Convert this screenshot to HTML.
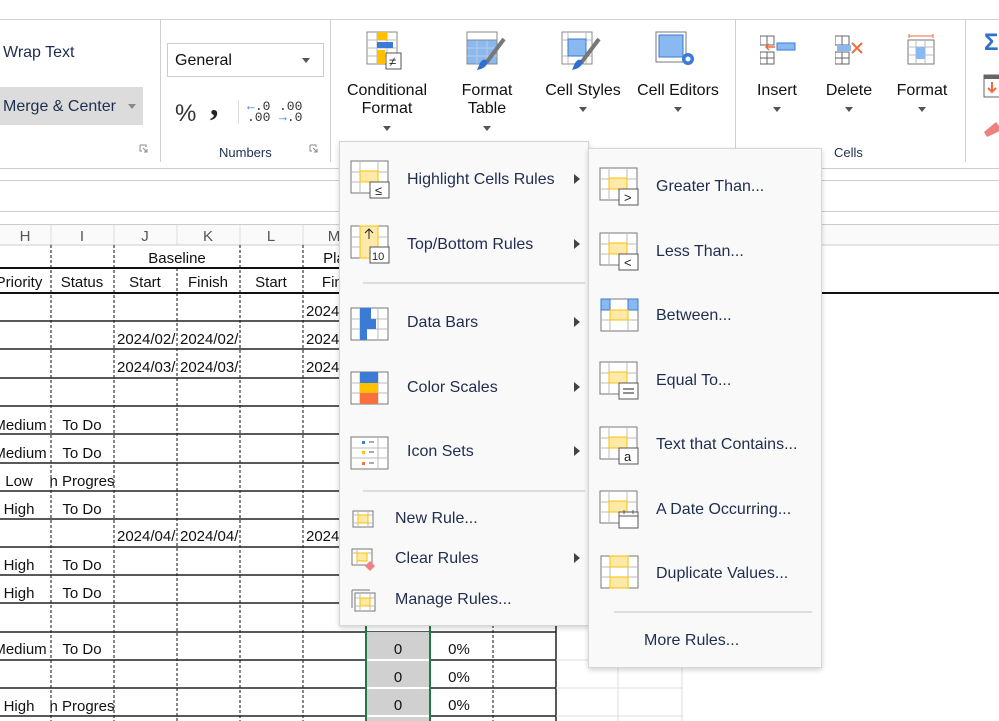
<!DOCTYPE html>
<html><head><meta charset="utf-8"><style>
*{margin:0;padding:0;box-sizing:border-box}
body{width:999px;height:721px;overflow:hidden;background:#fff;font-family:"Liberation Sans",Arial,sans-serif;position:relative}
.a{position:absolute;white-space:nowrap}
.rl{font-size:16px;color:#111;text-align:center;line-height:18px}
.tri{width:0;height:0;border-left:4px solid transparent;border-right:4px solid transparent;border-top:5px solid #555;position:absolute}
.menu{position:absolute;background:#f9f9f9;border:1px solid #d6d6d6;box-shadow:0 2px 5px rgba(0,0,0,.18)}
.mt{position:absolute;font-size:16px;color:#1f2d4e;white-space:nowrap}
.ar{position:absolute;width:0;height:0;border-top:5px solid transparent;border-bottom:5px solid transparent;border-left:6px solid #444}
.sep{position:absolute;height:2px;background:#ddd}
.lbl{font-size:13px;color:#1f2d4e}
</style></head><body>
<!-- ribbon -->
<div class="a" style="left:0;top:19px;width:999px;height:1px;background:#d0d0d0"></div>
<div class="a" style="left:3px;top:44px;font-size:16px;color:#1f2d4e">Wrap Text</div>
<div class="a" style="left:0;top:87px;width:143px;height:38px;background:#dcdcdc"></div>
<div class="a" style="left:3px;top:98px;font-size:16px;color:#1f2d4e">Merge &amp; Center</div>
<div class="tri" style="left:128px;top:104px;border-top-color:#888"></div>
<svg class="a" style="left:139px;top:144px" width="10" height="10"><path d="M1 1h6v2M1 1v6h2M4 4l4 4M8 5v3H5" stroke="#888" fill="none"/></svg>
<div class="a" style="left:160px;top:20px;width:1px;height:142px;background:#d0d0d0"></div>
<div class="a" style="left:167px;top:43px;width:157px;height:34px;border:1px solid #ccc"></div>
<div class="a" style="left:175px;top:52px;font-size:16px;color:#111">General</div>
<div class="tri" style="left:302px;top:58px"></div>
<div class="a" style="left:175px;top:100px;font-size:24px;color:#333">%</div>
<div class="a" style="left:210px;top:86px;font-size:34px;color:#222;font-weight:bold;font-family:'Liberation Serif'">,</div>
<div class="a" style="left:238px;top:100px;width:1px;height:24px;background:#ddd"></div>
<div class="a" style="left:247px;top:101px;font-size:13px;line-height:11px;color:#333;font-family:'Liberation Mono'"><span style="color:#3a7bd5">←</span>.0<br>.00</div>
<div class="a" style="left:279px;top:101px;font-size:13px;line-height:11px;color:#333;font-family:'Liberation Mono'">.00<br><span style="color:#3a7bd5">→</span>.0</div>
<div class="a lbl" style="left:219px;top:145px">Numbers</div>
<svg class="a" style="left:309px;top:144px" width="10" height="10"><path d="M1 1h6v2M1 1v6h2M4 4l4 4M8 5v3H5" stroke="#888" fill="none"/></svg>
<div class="a" style="left:330px;top:20px;width:1px;height:142px;background:#d0d0d0"></div>
<!-- CF icons -->
<svg class="a" style="left:366px;top:31px" width="36" height="40"><rect x="1" y="1" width="30" height="32" fill="#fff" stroke="#888"/><path d="M1 9h30M1 17h30M1 25h30M11 1v32M21 1v32" stroke="#bbb"/><rect x="11" y="1" width="10" height="8" fill="#ffc000"/><rect x="11" y="11" width="16" height="6" fill="#3a7bd5"/><rect x="11" y="19" width="8" height="14" fill="#ffc000"/><rect x="20" y="22" width="15" height="16" fill="#fff" stroke="#555"/><text x="23" y="35" font-size="13" fill="#222" font-family="Liberation Sans">≠</text></svg>
<svg class="a" style="left:466px;top:31px" width="42" height="42"><rect x="1" y="1" width="30" height="32" fill="#8ab8f0" stroke="#888"/><path d="M1 9h30M1 17h30M1 25h30M11 1v32M21 1v32" stroke="#bcd"/><rect x="1" y="1" width="30" height="8" fill="#fff" stroke="#888"/><path d="M38 8L20 32" stroke="#777" stroke-width="4"/><path d="M14 32c4-6 8-3 7 1-2 4-6 5-10 6z" fill="#2e6fd0"/></svg>
<div class="a rl" style="left:337px;top:82px;width:100px">Conditional<br>Format</div>
<div class="tri" style="left:383px;top:126px"></div>
<div class="a rl" style="left:437px;top:82px;width:100px">Format<br>Table</div>
<div class="tri" style="left:483px;top:126px"></div>
<svg class="a" style="left:561px;top:31px" width="42" height="42"><rect x="1" y="1" width="30" height="32" fill="#fff" stroke="#888"/><path d="M1 9h30M1 25h30M7 1v32M25 1v32" stroke="#bbb"/><rect x="7" y="8" width="18" height="17" fill="#8ab8f0" stroke="#3a7bd5"/><path d="M38 8L20 32" stroke="#777" stroke-width="4"/><path d="M14 32c4-6 8-3 7 1-2 4-6 5-10 6z" fill="#2e6fd0"/></svg>
<svg class="a" style="left:655px;top:31px" width="42" height="42"><rect x="1" y="1" width="30" height="30" fill="#fff" stroke="#777"/><rect x="4" y="4" width="24" height="22" fill="#8ab8f0" stroke="#3a7bd5"/><circle cx="33" cy="28" r="6" fill="#3a7bd5"/><circle cx="33" cy="28" r="2.5" fill="#fff"/></svg>
<div class="a rl" style="left:533px;top:82px;width:100px">Cell Styles</div>
<div class="tri" style="left:579px;top:107px"></div>
<div class="a rl" style="left:628px;top:82px;width:100px">Cell Editors</div>
<div class="tri" style="left:674px;top:107px"></div>
<div class="a" style="left:735px;top:20px;width:1px;height:142px;background:#d0d0d0"></div>
<svg class="a" style="left:760px;top:35px" width="36" height="32"><rect x="0" y="1" width="14" height="9" fill="#fff" stroke="#666"/><path d="M7 1v9M0 17h14M7 17v12M0 23h14" stroke="#666"/><rect x="0" y="17" width="14" height="12" fill="none" stroke="#666"/><rect x="17" y="8" width="18" height="7" fill="#8ab8f0" stroke="#3a7bd5"/><path d="M15 12H6M9 9l-3 3 3 3" stroke="#f26b3a" fill="none" stroke-width="1.5"/></svg>
<svg class="a" style="left:835px;top:35px" width="32" height="32"><rect x="0" y="1" width="14" height="9" fill="#fff" stroke="#666"/><path d="M7 1v9M7 17v12M0 23h14" stroke="#666"/><rect x="0" y="17" width="14" height="12" fill="none" stroke="#666"/><rect x="2" y="10" width="14" height="6" fill="#8ab8f0"/><path d="M17 8l10 10M27 8L17 18" stroke="#f26b3a" stroke-width="2"/></svg>
<svg class="a" style="left:906px;top:33px" width="32" height="36"><path d="M3 3h24M3 1v4M27 1v4" stroke="#f26b3a"/><rect x="2" y="7" width="26" height="24" fill="#fff" stroke="#777"/><path d="M2 14h26M2 22h26M10 7v24M19 7v24" stroke="#bbb"/><rect x="10" y="14" width="9" height="12" fill="#8ab8f0"/></svg>
<div class="a rl" style="left:737px;top:82px;width:80px">Insert</div>
<div class="tri" style="left:773px;top:107px"></div>
<div class="a rl" style="left:809px;top:82px;width:80px">Delete</div>
<div class="tri" style="left:845px;top:107px"></div>
<div class="a rl" style="left:882px;top:82px;width:80px">Format</div>
<div class="tri" style="left:918px;top:107px"></div>
<div class="a lbl" style="left:834px;top:145px">Cells</div>
<div class="a" style="left:965px;top:20px;width:1px;height:142px;background:#d0d0d0"></div>
<div class="a" style="left:984px;top:29px;font-size:24px;color:#2e6fd0;font-weight:bold">Σ</div>
<svg class="a" style="left:983px;top:74px" width="16" height="26"><rect x="1" y="1" width="18" height="22" fill="#fff" stroke="#666"/><rect x="1" y="1" width="18" height="4" fill="#666"/><path d="M9 8v10M5 14l4 4 4-4" stroke="#f26b3a" stroke-width="2" fill="none"/></svg>
<svg class="a" style="left:983px;top:115px" width="16" height="24"><path d="M4 22l-3-5 12-10 6 8z" fill="#ee8080"/></svg>
<!-- bars -->
<div class="a" style="left:0;top:168px;width:999px;height:1px;background:#ccc"></div>
<div class="a" style="left:0;top:180px;width:999px;height:1px;background:#ccc"></div>
<div class="a" style="left:0;top:211px;width:999px;height:1px;background:#ccc"></div>
<div class="a" style="left:0;top:224px;width:999px;height:1px;background:#ccc"></div>
<!-- grid -->
<svg class="a" style="left:0;top:224px" width="999" height="497" font-family="Liberation Sans" font-size="15" fill="#111">
<rect x="0" y="1" width="999" height="20" fill="#fafafa"/>
<g stroke="#ddd"><path d="M51 1v20M114 1v20M177 1v20M240 1v20M303 1v20M366 1v20"/></g>
<g fill="#555" text-anchor="middle"><text x="25" y="17">H</text><text x="82" y="17">I</text><text x="145" y="17">J</text><text x="208" y="17">K</text><text x="271" y="17">L</text><text x="334" y="17">M</text></g>
<path d="M0 21h999" stroke="#ccc"/>
<path d="M0 44h560M0 69h999" stroke="#111" stroke-width="2"/>
<g stroke="#111" stroke-dasharray="3,2">
<path d="M51 21v476M114 21v476M240 21v476M303 21v476M177 44v453M493 21v476"/>
</g>
<g stroke="#222" stroke-width="1.5">
<path d="M0 97h560M0 125h560M0 154h560M0 182h560M0 210h560M0 239h560M0 267h560M0 295h560M0 323h560M0 351h560M0 379h560M0 408h556M0 436h556M0 464h556M0 492h556"/>
<path d="M556 21v476"/>
</g>
<g stroke="#ddd"><path d="M556 436h127M556 464h127M556 492h127M618 400v97M682 400v97"/></g>
<rect x="367" y="408" width="62" height="89" fill="#d0d0d0"/>
<g stroke="#fff" stroke-width="2"><path d="M367 436h62M367 464h62M367 492h62"/></g>
<g stroke="#1e7b45" stroke-width="2"><path d="M366 380v117M430 380v117"/></g>
<g text-anchor="middle">
<text x="177" y="39">Baseline</text><text x="334" y="39">Pla</text>
<text x="19" y="63">Priority</text><text x="82" y="63">Status</text><text x="145" y="63">Start</text><text x="208" y="63">Finish</text><text x="271" y="63">Start</text><text x="334" y="63">Fini</text>
<text x="20" y="206">Medium</text><text x="82" y="206">To Do</text>
<text x="20" y="234">Medium</text><text x="82" y="234">To Do</text>
<text x="19" y="262">Low</text><text x="82" y="262">n Progres</text>
<text x="19" y="290">High</text><text x="82" y="290">To Do</text>
<text x="19" y="346">High</text><text x="82" y="346">To Do</text>
<text x="19" y="374">High</text><text x="82" y="374">To Do</text>
<text x="20" y="430">Medium</text><text x="82" y="430">To Do</text>
<text x="19" y="487">High</text><text x="82" y="487">n Progres</text>
<text x="398" y="430">0</text><text x="459" y="430">0%</text>
<text x="398" y="458">0</text><text x="459" y="458">0%</text>
<text x="398" y="486">0</text><text x="459" y="486">0%</text>
</g>
<g>
<text x="306" y="92">2024</text>
<text x="117" y="120">2024/02/</text><text x="180" y="120">2024/02/</text><text x="306" y="120">2024</text>
<text x="117" y="148">2024/03/</text><text x="180" y="148">2024/03/</text><text x="306" y="148">2024</text>
<text x="117" y="317">2024/04/</text><text x="180" y="317">2024/04/</text><text x="306" y="317">2024</text>
</g>
</svg>
<!-- menu 1 -->
<div class="menu" style="left:339px;top:141px;width:250px;height:485px">
<svg class="a" style="left:10px;top:18px" width="42" height="40"><rect x="1" y="1" width="37" height="32" fill="#fff" stroke="#777"/><path d="M1 12h37M1 22h37M10 1v32M28 1v32" stroke="#bbb"/><rect x="10" y="11" width="18" height="11" fill="#fde9a8" stroke="#ffc000"/><rect x="20" y="22" width="19" height="16" fill="#fff" stroke="#555"/><text x="25" y="35" font-size="13" fill="#222" font-family="Liberation Sans">≤</text></svg>
<div class="mt" style="left:67px;top:29px">Highlight Cells Rules</div><div class="ar" style="left:234px;top:32px"></div>
<svg class="a" style="left:10px;top:83px" width="42" height="40"><rect x="1" y="1" width="37" height="32" fill="#fff" stroke="#777"/><path d="M1 12h37M1 22h37M28 1v32" stroke="#bbb"/><rect x="10" y="1" width="18" height="32" fill="#fde9a8" stroke="#ffc000"/><path d="M19 14V4M15 8l4-4 4 4" stroke="#222" fill="none"/><rect x="20" y="22" width="19" height="16" fill="#fff" stroke="#555"/><text x="22" y="35" font-size="11" fill="#222" font-family="Liberation Sans">10</text></svg>
<div class="mt" style="left:67px;top:94px">Top/Bottom Rules</div><div class="ar" style="left:234px;top:97px"></div>
<div class="sep" style="left:23px;top:140px;width:222px"></div>
<svg class="a" style="left:10px;top:165px" width="42" height="36"><rect x="1" y="1" width="37" height="32" fill="#fff" stroke="#777"/><path d="M1 12h37M1 22h37M10 1v32M28 1v32" stroke="#bbb"/><rect x="10" y="1" width="11" height="11" fill="#3a7bd5"/><rect x="10" y="12" width="16" height="10" fill="#3a7bd5"/><rect x="10" y="22" width="7" height="11" fill="#3a7bd5"/></svg>
<div class="mt" style="left:67px;top:172px">Data Bars</div><div class="ar" style="left:234px;top:175px"></div>
<svg class="a" style="left:10px;top:229px" width="42" height="36"><rect x="1" y="1" width="37" height="32" fill="#fff" stroke="#777"/><path d="M1 12h37M1 22h37M10 1v32M28 1v32" stroke="#bbb"/><rect x="10" y="1" width="18" height="11" fill="#3a7bd5"/><rect x="10" y="12" width="18" height="10" fill="#ffc000"/><rect x="10" y="22" width="18" height="11" fill="#f9703e"/></svg>
<div class="mt" style="left:67px;top:237px">Color Scales</div><div class="ar" style="left:234px;top:240px"></div>
<svg class="a" style="left:10px;top:294px" width="42" height="36"><rect x="1" y="1" width="37" height="32" fill="#fff" stroke="#777"/><path d="M1 12h37M1 22h37M28 1v32" stroke="#bbb"/><rect x="12" y="5" width="3" height="3" fill="#3a7bd5"/><rect x="12" y="15" width="3" height="3" fill="#ffc000"/><rect x="12" y="26" width="3" height="3" fill="#f9703e"/><path d="M19 6h5M19 16h5M19 27h5" stroke="#555"/></svg>
<div class="mt" style="left:67px;top:301px">Icon Sets</div><div class="ar" style="left:234px;top:304px"></div>
<div class="sep" style="left:23px;top:348px;width:222px"></div>
<svg class="a" style="left:12px;top:368px" width="24" height="20"><rect x="1" y="1" width="20" height="16" fill="#fff" stroke="#777"/><path d="M1 5h20M1 13h20M6 1v16M16 1v16" stroke="#bbb"/><rect x="6" y="5" width="10" height="8" fill="#fde9a8" stroke="#ffc000"/></svg>
<div class="mt" style="left:55px;top:368px">New Rule...</div>
<svg class="a" style="left:11px;top:406px" width="26" height="24"><rect x="1" y="1" width="20" height="16" fill="#fff" stroke="#777"/><path d="M1 5h20M6 1v16" stroke="#bbb"/><rect x="6" y="5" width="10" height="8" fill="#fde9a8" stroke="#ffc000"/><path d="M14 18l5-5 5 5-5 5z" fill="#ee8080"/></svg>
<div class="mt" style="left:55px;top:408px">Clear Rules</div><div class="ar" style="left:234px;top:411px"></div>
<svg class="a" style="left:11px;top:447px" width="26" height="24"><path d="M1 1v18M1 1h18" stroke="#777"/><rect x="4" y="4" width="20" height="18" fill="#fff" stroke="#777"/><path d="M4 9h20M4 17h20M9 4v18M19 4v18" stroke="#bbb"/><rect x="9" y="9" width="10" height="8" fill="#fde9a8" stroke="#ffc000"/></svg>
<div class="mt" style="left:55px;top:449px">Manage Rules...</div>
</div>
<!-- menu 2 -->
<div class="menu" style="left:588px;top:148px;width:234px;height:520px">
<svg class="a" style="left:10px;top:18px" width="42" height="40"><rect x="1" y="1" width="37" height="32" fill="#fff" stroke="#777"/><path d="M1 12h37M1 22h37M10 1v32M28 1v32" stroke="#bbb"/><rect x="10" y="11" width="18" height="11" fill="#fde9a8" stroke="#ffc000"/><rect x="20" y="22" width="19" height="16" fill="#fff" stroke="#555"/><text x="25" y="35" font-size="13" fill="#222" font-family="Liberation Sans">&gt;</text></svg>
<div class="mt" style="left:67px;top:29px">Greater Than...</div>
<svg class="a" style="left:10px;top:83px" width="42" height="40"><rect x="1" y="1" width="37" height="32" fill="#fff" stroke="#777"/><path d="M1 12h37M1 22h37M10 1v32M28 1v32" stroke="#bbb"/><rect x="10" y="11" width="18" height="11" fill="#fde9a8" stroke="#ffc000"/><rect x="20" y="22" width="19" height="16" fill="#fff" stroke="#555"/><text x="25" y="35" font-size="13" fill="#222" font-family="Liberation Sans">&lt;</text></svg>
<div class="mt" style="left:67px;top:94px">Less Than...</div>
<svg class="a" style="left:11px;top:149px" width="42" height="36"><rect x="1" y="1" width="37" height="32" fill="#fff" stroke="#777"/><path d="M1 12h37M1 22h37M10 1v32M28 1v32" stroke="#bbb"/><rect x="1" y="1" width="9" height="11" fill="#8ab8f0" stroke="#3a7bd5"/><rect x="28" y="1" width="10" height="11" fill="#8ab8f0" stroke="#3a7bd5"/><rect x="10" y="12" width="18" height="10" fill="#fde9a8" stroke="#ffc000"/></svg>
<div class="mt" style="left:67px;top:158px">Between...</div>
<svg class="a" style="left:10px;top:212px" width="42" height="40"><rect x="1" y="1" width="37" height="32" fill="#fff" stroke="#777"/><path d="M1 12h37M1 22h37M10 1v32M28 1v32" stroke="#bbb"/><rect x="10" y="11" width="18" height="11" fill="#fde9a8" stroke="#ffc000"/><rect x="20" y="22" width="19" height="16" fill="#fff" stroke="#555"/><path d="M24 28h11M24 32h11" stroke="#222"/></svg>
<div class="mt" style="left:67px;top:223px">Equal To...</div>
<svg class="a" style="left:10px;top:277px" width="42" height="40"><rect x="1" y="1" width="37" height="32" fill="#fff" stroke="#777"/><path d="M1 12h37M1 22h37M10 1v32M28 1v32" stroke="#bbb"/><rect x="10" y="11" width="18" height="11" fill="#fde9a8" stroke="#ffc000"/><rect x="20" y="22" width="19" height="16" fill="#fff" stroke="#555"/><text x="25" y="35" font-size="13" fill="#222" font-family="Liberation Sans">a</text></svg>
<div class="mt" style="left:67px;top:287px">Text that Contains...</div>
<svg class="a" style="left:10px;top:341px" width="42" height="40"><rect x="1" y="1" width="37" height="32" fill="#fff" stroke="#777"/><path d="M1 12h37M1 22h37M10 1v32M28 1v32" stroke="#bbb"/><rect x="10" y="11" width="18" height="11" fill="#fde9a8" stroke="#ffc000"/><rect x="20" y="22" width="19" height="16" fill="#fff" stroke="#555"/><path d="M20 26h19M25 20v4M34 20v4" stroke="#555"/></svg>
<div class="mt" style="left:67px;top:352px">A Date Occurring...</div>
<svg class="a" style="left:11px;top:406px" width="42" height="36"><rect x="1" y="1" width="37" height="32" fill="#fff" stroke="#777"/><path d="M1 12h37M1 22h37M10 1v32M28 1v32" stroke="#bbb"/><rect x="10" y="1" width="18" height="11" fill="#fde9a8" stroke="#ffc000"/><rect x="10" y="22" width="18" height="11" fill="#fde9a8" stroke="#ffc000"/></svg>
<div class="mt" style="left:67px;top:416px">Duplicate Values...</div>
<div class="sep" style="left:25px;top:462px;width:198px"></div>
<div class="mt" style="left:55px;top:483px">More Rules...</div>
</div>
</body></html>
